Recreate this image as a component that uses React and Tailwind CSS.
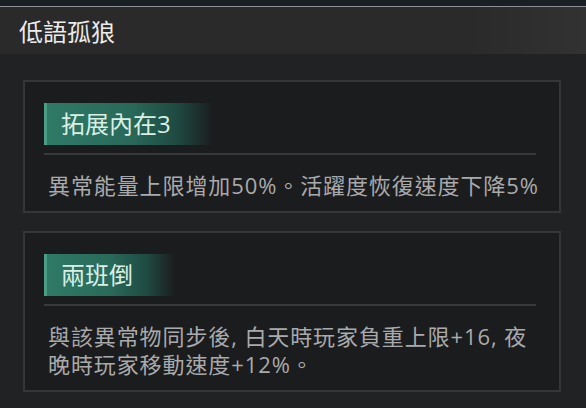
const font = { fontFamily: '"Open Sans", "Noto Sans CJK TC", "Noto Sans", sans-serif' }

const perks = [
  { name: '拓展內在3', text: '異常能量上限增加50%。活躍度恢復速度下降5%' },
  { name: '兩班倒', text: '與該異常物同步後, 白天時玩家負重上限+16, 夜晚時玩家移動速度+12%。' },
]

function PerkCard({ perk }) {
  return (
    <div className="border-2 border-[#353638] bg-[#1b1c1e] pl-[19px] pr-[23px] pt-[21px] pb-[12px]">
      <div className="inline-flex h-[42px] items-center border-l-[3px] border-[#4a9e86] bg-[linear-gradient(90deg,#2f7a66_0%,#29695a_50%,#1f4a41_78%,rgba(27,28,30,0)_100%)] pl-[14px] pr-[42px]">
        <span className="text-[24px] leading-none text-[#d9efe6]">{perk.name}</span>
      </div>
      <div className="mt-[8px] h-[2px] bg-[#38393b]" />
      <p className="mt-[16px] -mr-[7px] pl-[4px] text-[22px] leading-[28px] tracking-[0.9px] text-[#a9aaab]">{perk.text}</p>
    </div>
  )
}

export default function App() {
  return (
    <div className="w-[586px] h-[408px] overflow-hidden bg-[#212224]" style={font}>
      <div className="h-[6px] bg-[#1a1f25]" />
      <div className="h-px bg-[#8b9095]" />
      <div className="flex h-[47px] items-center bg-[linear-gradient(90deg,#2a2a2a_0%,#2a2a2a_80%,#323232_100%)] pl-[19px]">
        <h1 className="mt-[2px] text-[24px] leading-none text-[#ececec]">低語孤狼</h1>
      </div>
      <div className="flex flex-col gap-[18px] pl-[23px] pr-[25px] pt-[26px]">
        {perks.map(p => <PerkCard key={p.name} perk={p} />)}
      </div>
    </div>
  )
}
